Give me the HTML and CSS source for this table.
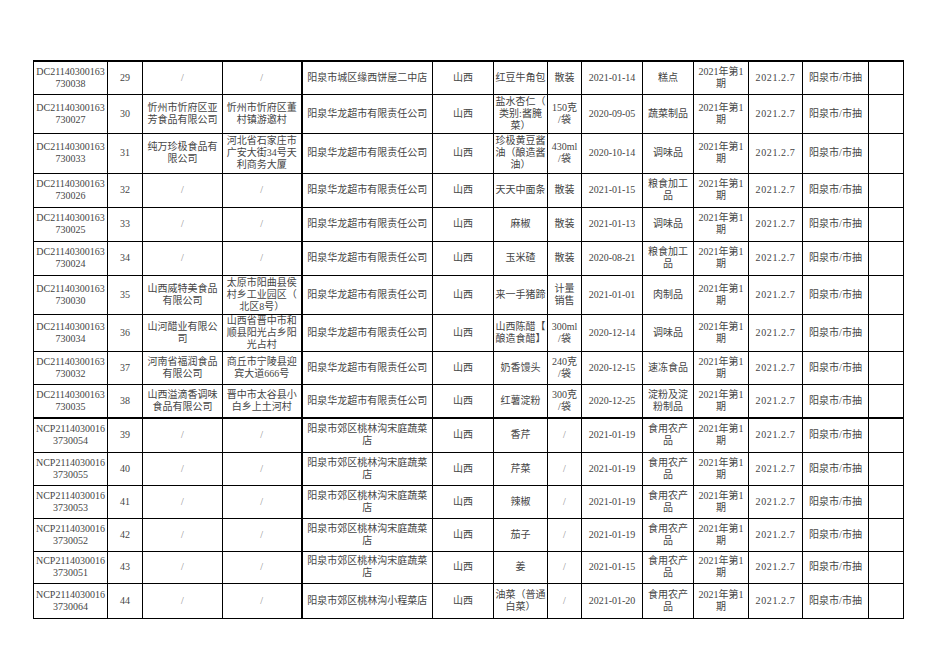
FILE: index.html
```html
<!DOCTYPE html>
<html lang="zh-CN">
<head>
<meta charset="utf-8">
<title>抽检信息</title>
<link rel="stylesheet" href="styles.css">
</head>
<body>
<table class="sheet">
  <colgroup>
    <col class="c1"><col class="c2"><col class="c3"><col class="c4"><col class="c5"><col class="c6"><col class="c7">
    <col class="c8"><col class="c9"><col class="c10"><col class="c11"><col class="c12"><col class="c13"><col class="c14">
  </colgroup>
  <tbody>
    <tr class="r first h33">
      <td>DC21140300163<br>730038</td><td>29</td><td class="na">/</td><td class="na split">/</td>
      <td>阳泉市城区缘西饼屋二中店</td><td>山西</td><td>红豆牛角包</td><td>散装</td><td>2021-01-14</td><td>糕点</td>
      <td>2021年第1<br>期</td><td class="pd">2021.2.7</td><td>阳泉市/市抽</td><td></td>
    </tr>
    <tr class="r h39">
      <td>DC21140300163<br>730027</td><td>30</td><td>忻州市忻府区亚<br>芳食品有限公司</td><td class="split">忻州市忻府区董<br>村镇游邀村</td>
      <td>阳泉华龙超市有限责任公司</td><td>山西</td><td>盐水杏仁（<br>类别:酱腌<br>菜）</td><td>150克<br>/袋</td><td>2020-09-05</td><td>蔬菜制品</td>
      <td>2021年第1<br>期</td><td class="pd">2021.2.7</td><td>阳泉市/市抽</td><td></td>
    </tr>
    <tr class="r h40">
      <td>DC21140300163<br>730033</td><td>31</td><td>纯万珍极食品有<br>限公司</td><td class="split">河北省石家庄市<br>广安大街34号天<br>利商务大厦</td>
      <td>阳泉华龙超市有限责任公司</td><td>山西</td><td>珍极黄豆酱<br>油（酿造酱<br>油）</td><td>430ml<br>/袋</td><td>2020-10-14</td><td>调味品</td>
      <td>2021年第1<br>期</td><td class="pd">2021.2.7</td><td>阳泉市/市抽</td><td></td>
    </tr>
    <tr class="r h34">
      <td>DC21140300163<br>730026</td><td>32</td><td class="na">/</td><td class="na split">/</td>
      <td>阳泉华龙超市有限责任公司</td><td>山西</td><td>天天中面条</td><td>散装</td><td>2021-01-15</td><td>粮食加工<br>品</td>
      <td>2021年第1<br>期</td><td class="pd">2021.2.7</td><td>阳泉市/市抽</td><td></td>
    </tr>
    <tr class="r h34">
      <td>DC21140300163<br>730025</td><td>33</td><td class="na">/</td><td class="na split">/</td>
      <td>阳泉华龙超市有限责任公司</td><td>山西</td><td>麻椒</td><td>散装</td><td>2021-01-13</td><td>调味品</td>
      <td>2021年第1<br>期</td><td class="pd">2021.2.7</td><td>阳泉市/市抽</td><td></td>
    </tr>
    <tr class="r h34">
      <td>DC21140300163<br>730024</td><td>34</td><td class="na">/</td><td class="na split">/</td>
      <td>阳泉华龙超市有限责任公司</td><td>山西</td><td>玉米碴</td><td>散装</td><td>2020-08-21</td><td>粮食加工<br>品</td>
      <td>2021年第1<br>期</td><td class="pd">2021.2.7</td><td>阳泉市/市抽</td><td></td>
    </tr>
    <tr class="r h39">
      <td>DC21140300163<br>730030</td><td>35</td><td>山西威特美食品<br>有限公司</td><td class="split">太原市阳曲县侯<br>村乡工业园区（<br>北区8号）</td>
      <td>阳泉华龙超市有限责任公司</td><td>山西</td><td>来一手猪蹄</td><td>计量<br>销售</td><td>2021-01-01</td><td>肉制品</td>
      <td>2021年第1<br>期</td><td class="pd">2021.2.7</td><td>阳泉市/市抽</td><td></td>
    </tr>
    <tr class="r h37">
      <td>DC21140300163<br>730034</td><td>36</td><td>山河醋业有限公<br>司</td><td class="split">山西省晋中市和<br>顺县阳光占乡阳<br>光占村</td>
      <td>阳泉华龙超市有限责任公司</td><td>山西</td><td>山西陈醋【<br>酿造食醋】</td><td>300ml<br>/袋</td><td>2020-12-14</td><td>调味品</td>
      <td>2021年第1<br>期</td><td class="pd">2021.2.7</td><td>阳泉市/市抽</td><td></td>
    </tr>
    <tr class="r h33">
      <td>DC21140300163<br>730032</td><td>37</td><td>河南省福润食品<br>有限公司</td><td class="split">商丘市宁陵县迎<br>宾大道666号</td>
      <td>阳泉华龙超市有限责任公司</td><td>山西</td><td>奶香馒头</td><td>240克<br>/袋</td><td>2020-12-15</td><td>速冻食品</td>
      <td>2021年第1<br>期</td><td class="pd">2021.2.7</td><td>阳泉市/市抽</td><td></td>
    </tr>
    <tr class="r sep h34">
      <td>DC21140300163<br>730035</td><td>38</td><td>山西溢滴香调味<br>食品有限公司</td><td class="split">晋中市太谷县小<br>白乡上土河村</td>
      <td>阳泉华龙超市有限责任公司</td><td>山西</td><td>红薯淀粉</td><td>300克<br>/袋</td><td>2020-12-25</td><td>淀粉及淀<br>粉制品</td>
      <td>2021年第1<br>期</td><td class="pd">2021.2.7</td><td>阳泉市/市抽</td><td></td>
    </tr>
    <tr class="r h34">
      <td>NCP2114030016<br>3730054</td><td>39</td><td class="na">/</td><td class="na split">/</td>
      <td>阳泉市郊区桃林沟宋庭蔬菜<br>店</td><td>山西</td><td>香芹</td><td class="na">/</td><td>2021-01-19</td><td>食用农产<br>品</td>
      <td>2021年第1<br>期</td><td class="pd">2021.2.7</td><td>阳泉市/市抽</td><td></td>
    </tr>
    <tr class="r h33">
      <td>NCP2114030016<br>3730055</td><td>40</td><td class="na">/</td><td class="na split">/</td>
      <td>阳泉市郊区桃林沟宋庭蔬菜<br>店</td><td>山西</td><td>芹菜</td><td class="na">/</td><td>2021-01-19</td><td>食用农产<br>品</td>
      <td>2021年第1<br>期</td><td class="pd">2021.2.7</td><td>阳泉市/市抽</td><td></td>
    </tr>
    <tr class="r h33">
      <td>NCP2114030016<br>3730053</td><td>41</td><td class="na">/</td><td class="na split">/</td>
      <td>阳泉市郊区桃林沟宋庭蔬菜<br>店</td><td>山西</td><td>辣椒</td><td class="na">/</td><td>2021-01-19</td><td>食用农产<br>品</td>
      <td>2021年第1<br>期</td><td class="pd">2021.2.7</td><td>阳泉市/市抽</td><td></td>
    </tr>
    <tr class="r h33">
      <td>NCP2114030016<br>3730052</td><td>42</td><td class="na">/</td><td class="na split">/</td>
      <td>阳泉市郊区桃林沟宋庭蔬菜<br>店</td><td>山西</td><td>茄子</td><td class="na">/</td><td>2021-01-19</td><td>食用农产<br>品</td>
      <td>2021年第1<br>期</td><td class="pd">2021.2.7</td><td>阳泉市/市抽</td><td></td>
    </tr>
    <tr class="r h32">
      <td>NCP2114030016<br>3730051</td><td>43</td><td class="na">/</td><td class="na split">/</td>
      <td>阳泉市郊区桃林沟宋庭蔬菜<br>店</td><td>山西</td><td>姜</td><td class="na">/</td><td>2021-01-15</td><td>食用农产<br>品</td>
      <td>2021年第1<br>期</td><td class="pd">2021.2.7</td><td>阳泉市/市抽</td><td></td>
    </tr>
    <tr class="r h35">
      <td>NCP2114030016<br>3730064</td><td>44</td><td class="na">/</td><td class="na split">/</td>
      <td>阳泉市郊区桃林沟小程菜店</td><td>山西</td><td>油菜（普通<br>白菜）</td><td class="na">/</td><td>2021-01-20</td><td>食用农产<br>品</td>
      <td>2021年第1<br>期</td><td class="pd">2021.2.7</td><td>阳泉市/市抽</td><td></td>
    </tr>
  </tbody>
</table>
</body>
</html>
```

FILE: styles.css
```css
html, body {
  margin: 0;
  padding: 0;
  background: #ffffff;
}

.sheet {
  margin: 60px 0 0 33px;
  border-collapse: collapse;
  table-layout: fixed;
  width: 870px;
  font-family: "Liberation Serif", "Noto Sans CJK SC", serif;
  font-size: 10px;
  line-height: 12px;
  color: #454545;
}

.c1 { width: 74px; }
.c2 { width: 35px; }
.c3 { width: 80px; }
.c4 { width: 79px; }
.c5 { width: 131px; }
.c6 { width: 61px; }
.c7 { width: 54px; }
.c8 { width: 34px; }
.c9 { width: 61px; }
.c10 { width: 51px; }
.c11 { width: 55px; }
.c12 { width: 54px; }
.c13 { width: 66px; }
.c14 { width: 35px; }

.sheet td {
  border: 1px solid #000;
  padding: 0;
  text-align: center;
  vertical-align: middle;
  white-space: nowrap;
  overflow: hidden;
}

.sheet .first td { border-top: 2px solid #000; }
.sheet .sep td { border-bottom: 2px solid #000; }
.sheet td.split { border-right: 2px solid #000; }
.sheet td.na { color: #8a8a8a; }
.sheet td.pd { letter-spacing: 0.6px; }

.h32 { height: 32px; }
.h33 { height: 33px; }
.h34 { height: 34px; }
.h35 { height: 35px; }
.h37 { height: 37px; }
.h39 { height: 39px; }
.h40 { height: 40px; }
```
